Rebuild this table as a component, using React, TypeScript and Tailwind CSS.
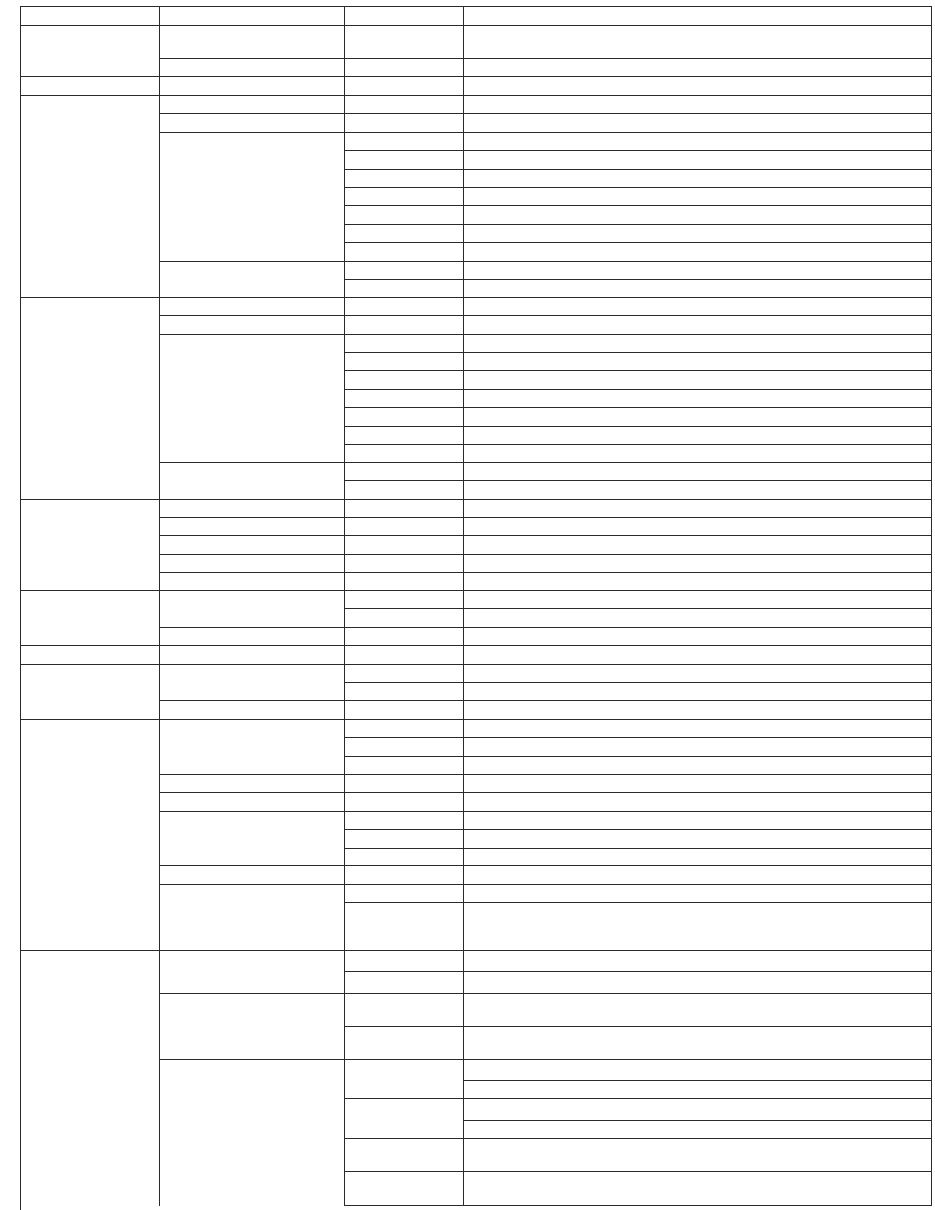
import React from "react";

const colClass: Record<string, string> = {
  A: "col-start-1",
  B: "col-start-2",
  C: "col-start-3",
  D: "col-start-4",
};

const spanClass: Record<number, string> = {
  1: "row-span-1",
  2: "row-span-2",
  3: "row-span-3",
  5: "row-span-5",
  6: "row-span-6",
  7: "row-span-7",
  10: "row-span-10",
  11: "row-span-11",
};

const CD = "C D";
const BCD = "B C D";

const rows: string[] = [
  "A B C D",
  "A2 B C D",
  BCD,
  "A B C D",
  "A11 B C D",
  BCD,
  "B7 C D",
  CD, CD, CD, CD, CD, CD,
  "B2 C D",
  CD,
  "A11 B C D",
  BCD,
  "B7 C D",
  CD, CD, CD, CD, CD, CD,
  "B2 C D",
  CD,
  "A5 B C D",
  BCD, BCD, BCD, BCD,
  "A3 B2 C D",
  CD,
  BCD,
  "A B C D",
  "A3 B2 C D",
  CD,
  BCD,
  "A11 B3 C D",
  CD, CD,
  BCD,
  BCD,
  "B3 C D",
  CD, CD,
  BCD,
  "B2 C D",
  CD,
  "A10x B2 C D",
  CD,
  "B2 C D",
  CD,
  "B6x C2 D",
  "D",
  "C2 D",
  "D",
  CD,
  CD,
];

type Cell = { key: string; cls: string };

function buildCells(): Cell[] {
  const out: Cell[] = [];
  rows.forEach((r, ri) => {
    r.split(" ").forEach((tok, ci) => {
      const letter = tok[0];
      const noBottom = tok.endsWith("x");
      const num = parseInt(tok.slice(1).replace("x", ""), 10);
      const span = isNaN(num) ? 1 : num;
      const cls = [
        colClass[letter],
        spanClass[span],
        "border-r border-[#2a2a2a]",
        noBottom ? "" : "border-b",
      ].join(" ");
      out.push({ key: `${ri}-${ci}`, cls });
    });
  });
  return out;
}

export default function App() {
  const cells = buildCells();
  return (
    <div className="min-h-[1210px] w-[935px] overflow-hidden bg-white pt-[6px] pl-[20px]">
      <div className="grid w-[912px] grid-cols-[139px_185px_119px_468px] grid-rows-[19px_33px_18px_19px_18px_19px_18px_19px_18px_18px_19px_18px_19px_18px_18px_18px_19px_18px_18px_19px_18px_19px_18px_18px_18px_19px_18px_18px_19px_18px_18px_18px_19px_18px_19px_18px_18px_19px_18px_19px_18px_18px_19px_18px_19px_17px_19px_18px_48px_21px_22px_33px_33px_21px_18px_22px_18px_33px_34px_20px] border-t border-l border-[#2a2a2a]">
        {cells.map((c) => (
          <div key={c.key} className={c.cls} />
        ))}
      </div>
    </div>
  );
}
